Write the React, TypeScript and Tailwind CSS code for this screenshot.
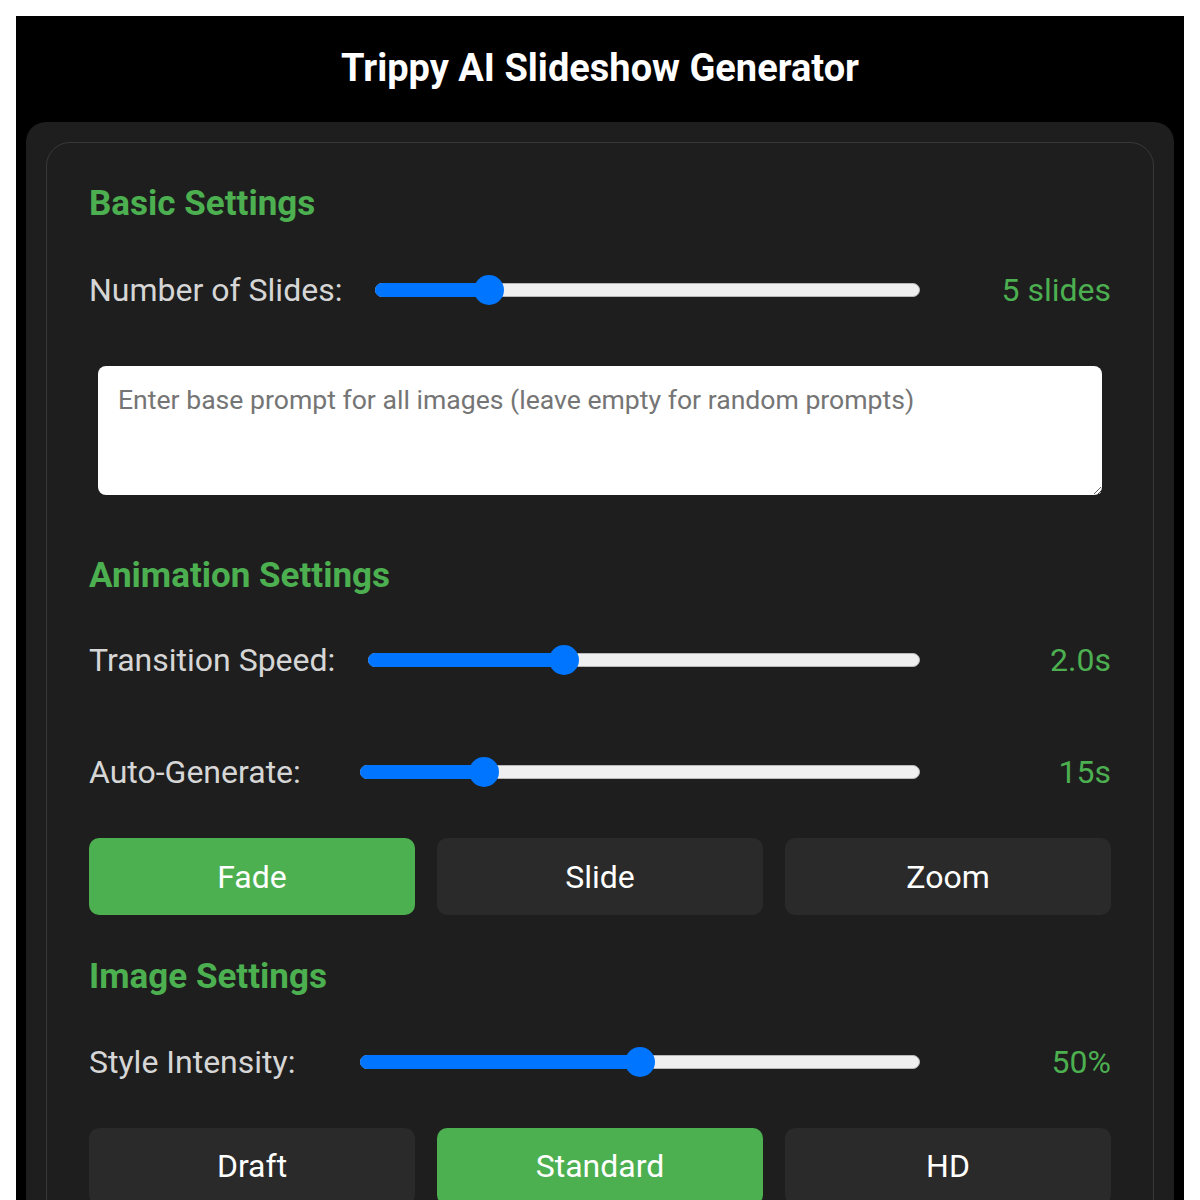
const font = { fontFamily: 'Roboto, "Noto Sans", sans-serif' };

type SliderProps = { label: string; value: string; pct: number; className?: string };

function SliderRow({ label, value, pct, className = "" }: SliderProps) {
  return (
    <div className={`flex items-center h-[38px] ${className}`}>
      <span className="min-w-[238px] mr-[33px] text-[32px] text-[#d6d6d6] whitespace-nowrap">{label}</span>
      <div className="relative flex-1 h-[14px]">
        <div className="absolute inset-0 rounded-full bg-[#efefef] border border-[#b8b8b8]" />
        <div className="absolute left-0 top-0 h-full rounded-full bg-[#0075ff]" style={{ width: `${pct}%` }} />
        <div
          className="absolute top-1/2 w-[30px] h-[30px] -translate-x-1/2 -translate-y-1/2 rounded-full bg-[#0075ff]"
          style={{ left: `${pct}%` }}
        />
      </div>
      <span className="w-[159px] ml-[32px] text-right text-[32px] text-[#4caf50] whitespace-nowrap">{value}</span>
    </div>
  );
}

function Options({ items, active }: { items: string[]; active: string }) {
  return (
    <div className="grid grid-cols-3 gap-[22px]">
      {items.map((item) => (
        <button
          key={item}
          className={`h-[77px] rounded-[10px] text-[32px] text-white ${
            item === active ? "bg-[#4caf50]" : "bg-[#2a2a2a]"
          }`}
        >
          {item}
        </button>
      ))}
    </div>
  );
}

export default function App() {
  return (
    <div className="min-h-screen bg-white p-4" style={font}>
      <div className="bg-black px-[10px] pt-[29px]">
        <h1 className="text-center text-[38px] font-bold text-white leading-[47px] mb-[30px]">
          Trippy AI Slideshow Generator
        </h1>

        <div className="rounded-[20px] bg-[#1e1e1e] p-[20px]">
          <div className="rounded-[24px] border border-[#383838] bg-[#1e1e1e] px-[42px] pt-[42px] pb-[42px]">
            <section>
              <h2 className="text-[35px] font-bold text-[#4caf50] leading-[37.5px]">Basic Settings</h2>
              <SliderRow label="Number of Slides:" value="5 slides" pct={20.9} className="mt-[48px]" />
              <textarea
                className="block w-[calc(100%-18px)] mx-[9px] mt-[57px] h-[129px] rounded-[8px] bg-white px-[20px] py-[14px] text-[26.6px] text-[#222] placeholder:text-[#757575] outline-none"
                placeholder="Enter base prompt for all images (leave empty for random prompts)"
              />
            </section>

            <section className="mt-[62px]">
              <h2 className="text-[35px] font-bold text-[#4caf50] leading-[37.5px]">Animation Settings</h2>
              <SliderRow label="Transition Speed:" value="2.0s" pct={35.4} className="mt-[47px]" />
              <SliderRow label="Auto-Generate:" value="15s" pct={22.1} className="mt-[74px]" />
              <div className="mt-[47px]">
                <Options items={["Fade", "Slide", "Zoom"]} active="Fade" />
              </div>
            </section>

            <section className="mt-[43px]">
              <h2 className="text-[35px] font-bold text-[#4caf50] leading-[37.5px]">Image Settings</h2>
              <SliderRow label="Style Intensity:" value="50%" pct={50} className="mt-[47px]" />
              <div className="mt-[47px]">
                <Options items={["Draft", "Standard", "HD"]} active="Standard" />
              </div>
            </section>
          </div>
        </div>
      </div>
    </div>
  );
}
